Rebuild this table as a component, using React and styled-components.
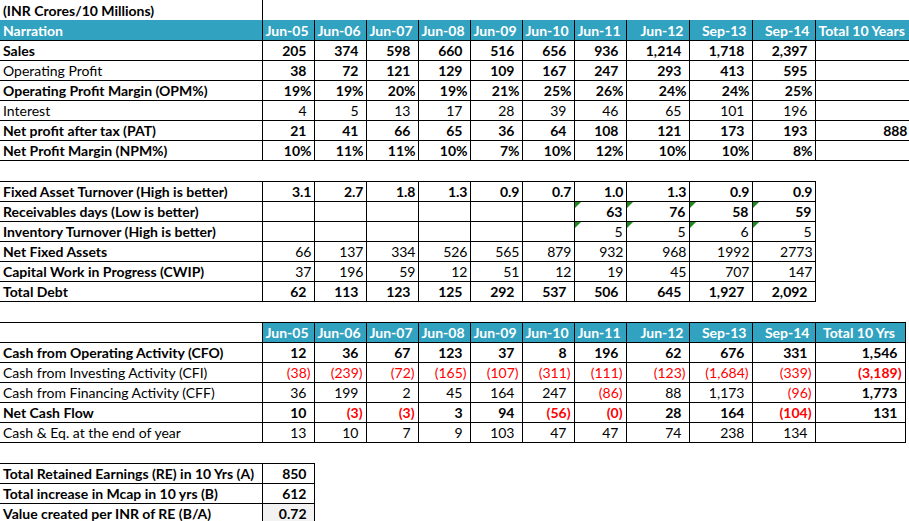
import React from "react";
import styled, { createGlobalStyle } from "styled-components";

const Global = createGlobalStyle`
  html, body { margin: 0; padding: 0; background: #fff; }
  body { font-family: Lato, "Liberation Sans", sans-serif; font-size: 14px; color: #000; overflow: hidden; }
`;

const TEAL = "#31a3c0";
const YEARS = ["Jun-05", "Jun-06", "Jun-07", "Jun-08", "Jun-09", "Jun-10", "Jun-11", "Jun-12", "Sep-13", "Sep-14"];
const COLS = [262, 52, 52, 52, 52, 52, 52, 52, 63, 63, 63];

const Sheet = styled.div`
  width: 909px;
  height: 521px;
  overflow: hidden;
  display: flex;
  flex-direction: column;
  gap: 20px;
`;

const Grid = styled.table`
  border-collapse: collapse;
  table-layout: fixed;
  width: ${(p) => p.$w}px;
  flex: none;
`;

const Row = styled.tr`
  height: 20px;
`;

const Cell = styled.td`
  padding: 0 3px;
  height: 19px;
  line-height: 18px;
  vertical-align: bottom;
  white-space: nowrap;
  overflow: hidden;
  border: 1px solid #000;
  &:first-child { border-left: none; }
`;

const TitleCell = styled(Cell)`
  border: none;
  font-weight: 700;
  &:first-child { border-right: 1px solid #000; }
`;

const HeadCell = styled(Cell)`
  background: ${(p) => (p.$blank ? "#fff" : TEAL)};
  color: #fff;
  font-weight: 700;
  text-align: ${(p) => p.$align || "right"};
  padding-right: 5px;
  border-top: ${(p) => (p.$noTop ? "none" : "1px solid #000")};
`;

const LabelCell = styled(Cell)`
  font-weight: ${(p) => (p.$bold ? 700 : 400)};
`;

const NumCell = styled(Cell)`
  position: relative;
  text-align: right;
  padding-right: ${(p) => p.$pad}px;
  font-weight: ${(p) => (p.$bold ? 700 : 400)};
  color: ${(p) => (p.$red ? "#ff0000" : "#000")};
  background: ${(p) => p.$fill || "transparent"};
  &::before {
    content: "";
    display: ${(p) => (p.$flag ? "block" : "none")};
    position: absolute;
    top: 0;
    left: 0;
    border-top: 6px solid #1e8a1e;
    border-right: 6px solid transparent;
  }
`;

const padFor = (v, fmt) => {
  if (fmt === "pct") return 2;
  if (fmt === "acct") return v.startsWith("(") ? 3 : 7;
  return 3;
};

const Cols = ({ widths }) => (
  <colgroup>
    {widths.map((w, i) => (
      <col key={i} style={{ width: w }} />
    ))}
  </colgroup>
);

const DataRow = ({ label, labelBold, bold, fmt, values, flags = [], totalBold }) => (
  <Row>
    <LabelCell $bold={labelBold}>{label}</LabelCell>
    {values.map((v, i) => (
      <NumCell
        key={i}
        $bold={i === 10 && totalBold !== undefined ? totalBold : bold}
        $red={v.startsWith("(")}
        $pad={padFor(v, fmt)}
        $flag={flags.includes(i)}
      >
        {v}
      </NumCell>
    ))}
  </Row>
);

const summary = [
  { label: "Sales", labelBold: true, bold: true, fmt: "acct", values: ["205", "374", "598", "660", "516", "656", "936", "1,214", "1,718", "2,397", ""] },
  { label: "Operating Profit", bold: true, fmt: "acct", values: ["38", "72", "121", "129", "109", "167", "247", "293", "413", "595", ""] },
  { label: "Operating Profit Margin (OPM%)", labelBold: true, bold: true, fmt: "pct", values: ["19%", "19%", "20%", "19%", "21%", "25%", "26%", "24%", "24%", "25%", ""] },
  { label: "Interest", fmt: "acct", values: ["4", "5", "13", "17", "28", "39", "46", "65", "101", "196", ""] },
  { label: "Net profit after tax (PAT)", labelBold: true, bold: true, fmt: "acct", values: ["21", "41", "66", "65", "36", "64", "108", "121", "173", "193", "888"] },
  { label: "Net Profit Margin (NPM%)", labelBold: true, bold: true, fmt: "pct", values: ["10%", "11%", "11%", "10%", "7%", "10%", "12%", "10%", "10%", "8%", ""] },
];

const ratios = [
  { label: "Fixed Asset Turnover (High is better)", bold: true, fmt: "pct", values: ["3.1", "2.7", "1.8", "1.3", "0.9", "0.7", "1.0", "1.3", "0.9", "0.9"] },
  { label: "Receivables days (Low is better)", bold: true, fmt: "plain", values: ["", "", "", "", "", "", "63", "76", "58", "59"], flags: [6, 7, 8, 9] },
  { label: "Inventory Turnover (High is better)", fmt: "plain", values: ["", "", "", "", "", "", "5", "5", "6", "5"], flags: [6, 7, 8, 9] },
  { label: "Net Fixed Assets", fmt: "pct", values: ["66", "137", "334", "526", "565", "879", "932", "968", "1992", "2773"] },
  { label: "Capital Work in Progress (CWIP)", fmt: "pct", values: ["37", "196", "59", "12", "51", "12", "19", "45", "707", "147"] },
  { label: "Total Debt", bold: true, fmt: "acct", values: ["62", "113", "123", "125", "292", "537", "506", "645", "1,927", "2,092"] },
];

const cash = [
  { label: "Cash from Operating Activity (CFO)", labelBold: true, bold: true, fmt: "acct", values: ["12", "36", "67", "123", "37", "8", "196", "62", "676", "331", "1,546"] },
  { label: "Cash from Investing Activity (CFI)", fmt: "acct", totalBold: true, values: ["(38)", "(239)", "(72)", "(165)", "(107)", "(311)", "(111)", "(123)", "(1,684)", "(339)", "(3,189)"] },
  { label: "Cash from Financing Activity (CFF)", fmt: "acct", totalBold: true, values: ["36", "199", "2", "45", "164", "247", "(86)", "88", "1,173", "(96)", "1,773"] },
  { label: "Net Cash Flow", labelBold: true, bold: true, fmt: "acct", values: ["10", "(3)", "(3)", "3", "94", "(56)", "(0)", "28", "164", "(104)", "131"] },
  { label: "Cash & Eq. at the end of year", fmt: "acct", values: ["13", "10", "7", "9", "103", "47", "47", "74", "238", "134", ""] },
];

const value = [
  { label: "Total Retained Earnings (RE) in 10 Yrs (A)", v: "850" },
  { label: "Total increase in Mcap in 10 yrs (B)", v: "612" },
  { label: "Value created per INR of RE (B/A)", v: "0.72", fill: "#f2f2f2" },
];

export default function App() {
  return (
    <>
      <Global />
      <Sheet>
        <Grid $w={915}>
          <Cols widths={[...COLS, 100]} />
          <tbody>
            <Row>
              <TitleCell>(INR Crores/10 Millions)</TitleCell>
              {Array.from({ length: 11 }).map((_, i) => (
                <TitleCell key={i} />
              ))}
            </Row>
            <Row>
              <HeadCell $align="left" $noTop>Narration</HeadCell>
              {YEARS.map((y) => (
                <HeadCell key={y} $noTop>{y}</HeadCell>
              ))}
              <HeadCell $noTop $align="left">Total 10 Years</HeadCell>
            </Row>
            {summary.map((r) => (
              <DataRow key={r.label} {...r} />
            ))}
          </tbody>
        </Grid>

        <Grid $w={815}>
          <Cols widths={COLS} />
          <tbody>
            {ratios.map((r) => (
              <DataRow key={r.label} labelBold {...r} />
            ))}
          </tbody>
        </Grid>

        <Grid $w={905}>
          <Cols widths={[...COLS, 90]} />
          <tbody>
            <Row>
              <HeadCell $blank />
              {YEARS.map((y) => (
                <HeadCell key={y}>{y}</HeadCell>
              ))}
              <HeadCell $align="center">Total 10 Yrs</HeadCell>
            </Row>
            {cash.map((r) => (
              <DataRow key={r.label} {...r} />
            ))}
          </tbody>
        </Grid>

        <Grid $w={314}>
          <Cols widths={[262, 52]} />
          <tbody>
            {value.map((r) => (
              <Row key={r.label}>
                <LabelCell $bold>{r.label}</LabelCell>
                <NumCell $bold $pad={7} $fill={r.fill}>{r.v}</NumCell>
              </Row>
            ))}
          </tbody>
        </Grid>
      </Sheet>
    </>
  );
}
